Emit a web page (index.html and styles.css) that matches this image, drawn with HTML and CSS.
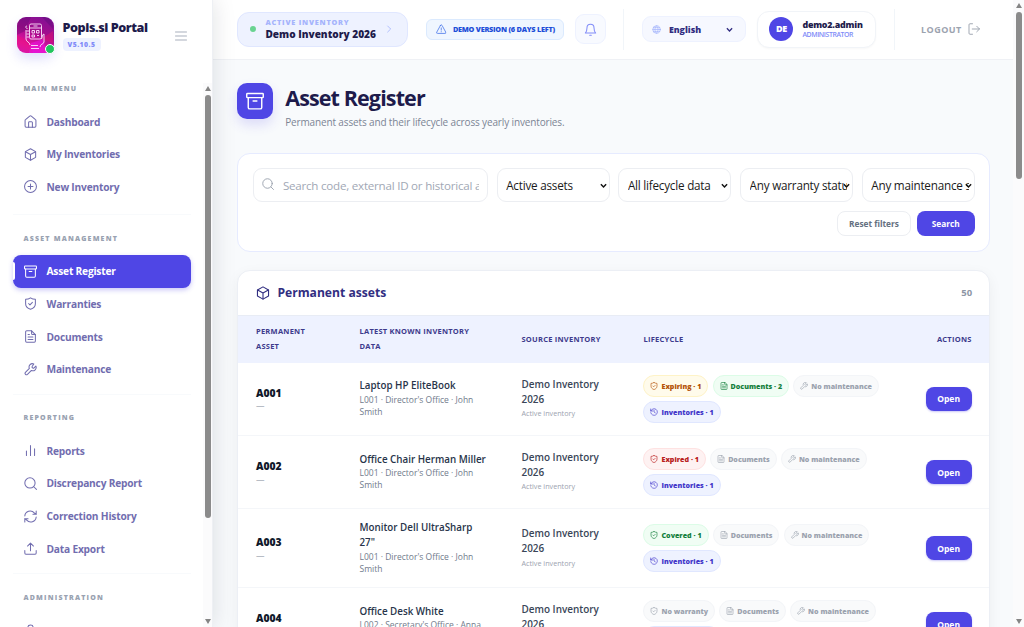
FILE: index.html
```html
<!DOCTYPE html>
<html lang="en">
<head>
    <meta charset="UTF-8">
    <meta name="viewport" content="width=device-width, initial-scale=1.0">
    <title>Asset Register - Popis.si Portal</title>
    <link rel="stylesheet" href="styles.css">
</head>
<body>

<svg class="sprite" xmlns="http://www.w3.org/2000/svg">
    <symbol id="i-home" viewBox="0 0 24 24"><path d="M2 10a2 2 0 0 1 .8-1.600l7.700-6.400a2.400 2.400 0 0 1 3 0l7.700 6.400A2 2 0 0 1 22 10v10.500a2 2 0 0 1-2 2H4a2 2 0 0 1-2-2z"/><path d="M8.500 22.500V14a1.500 1.500 0 0 1 1.500-1.500h4a1.500 1.500 0 0 1 1.500 1.500v8.500"/></symbol>
    <symbol id="i-box" viewBox="0 0 24 24"><path d="M12 1.500l9.500 5.200v10.600L12 22.500l-9.500-5.200V6.700z"/><path d="M2.800 7L12 12l9.200-5M12 12v10.300"/></symbol>
    <symbol id="i-plus" viewBox="0 0 24 24"><circle cx="12" cy="12" r="11"/><path d="M12 7.500v9M7.500 12h9"/></symbol>
    <symbol id="i-archive" viewBox="0 0 24 24"><rect x="1" y="2" width="22" height="5.500" rx="1"/><path d="M3 7.500V20.500a2 2 0 0 0 2 2h14a2 2 0 0 0 2-2V7.500M9.500 12h5"/></symbol>
    <symbol id="i-shield" viewBox="0 0 24 24"><path d="M12 1.500c2.500 1.700 5.500 2.700 9 2.800v8c0 5-3.500 8.500-9 10.500-5.500-2-9-5.500-9-10.500v-8c3.500-.1 6.500-1.100 9-2.800z"/><path d="M8.500 12l2.500 2.500 4.500-4.500"/></symbol>
    <symbol id="i-doc" viewBox="0 0 24 24"><path d="M14 1.500H5a2 2 0 0 0-2 2v17a2 2 0 0 0 2 2h14a2 2 0 0 0 2-2v-12z"/><path d="M14 1.500v5a2 2 0 0 0 2 2h5M7.500 8.500h2.500M7.500 13h9M7.500 17.500h9"/></symbol>
    <symbol id="i-wrench" viewBox="0 0 24 24"><path d="M15 6.500a1 1 0 0 0 0 1.500l1.500 1.500a1 1 0 0 0 1.500 0l3.900-3.900a6.200 6.200 0 0 1-8.200 8.200l-7.300 7.300a2.700 2.700 0 0 1-3.800-3.800l7.300-7.300a6.200 6.200 0 0 1 8.200-8.200z"/></symbol>
    <symbol id="i-chart" viewBox="0 0 24 24"><path d="M4.500 13v8M12 3v18M19.500 9v12"/></symbol>
    <symbol id="i-search" viewBox="0 0 24 24"><circle cx="11" cy="11" r="9.500"/><path d="M18 18l5 5"/></symbol>
    <symbol id="i-refresh" viewBox="0 0 24 24"><path d="M1.500 11A10 10 0 0 1 19 5.200L22.500 8M22.500 2v6h-6M22.500 13A10 10 0 0 1 5 18.800L1.500 16M1.500 22v-6h6"/></symbol>
    <symbol id="i-upload" viewBox="0 0 24 24"><path d="M12 16V2M6.500 7.500L12 2l5.500 5.500M1.500 15.500v5a2 2 0 0 0 2 2h17a2 2 0 0 0 2-2v-5"/></symbol>
    <symbol id="i-user" viewBox="0 0 24 24"><circle cx="12" cy="7" r="5"/><path d="M3 22a9 9 0 0 1 18 0"/></symbol>
    <symbol id="i-menu" viewBox="0 0 24 24"><path d="M1 4h22M1 12h22M1 20h22"/></symbol>
    <symbol id="i-warn" viewBox="0 0 24 24"><path d="M10.300 3L1.800 18.500A2 2 0 0 0 3.500 21.500h17a2 2 0 0 0 1.700-3L13.700 3a2 2 0 0 0-3.400 0zM12 9v5M12 17.500v.5"/></symbol>
    <symbol id="i-bell" viewBox="0 0 24 24"><path d="M2.500 18.500c2-2.500 3-4.500 3-9.500a6.500 6.500 0 0 1 13 0c0 5 1 7 3 9.500zM10.500 22.500h3"/></symbol>
    <symbol id="i-globe" viewBox="0 0 24 24"><circle cx="12" cy="12" r="10"/><path d="M2 12h20M12 2c-5.500 6-5.500 14 0 20M12 2c5.500 6 5.500 14 0 20M4 7h16M4 17h16"/></symbol>
    <symbol id="i-logout" viewBox="0 0 24 24"><path d="M9 1.500H4a2 2 0 0 0-2 2v17a2 2 0 0 0 2 2h5M8.500 12H23M17.500 6.500L23 12l-5.500 5.500"/></symbol>
    <symbol id="i-history" viewBox="0 0 24 24"><path d="M2 3v6h6M2.500 9a10 10 0 1 1-.3 5M12 6.500V12l4 2.500"/></symbol>
    <symbol id="i-right" viewBox="0 0 24 24"><path d="M8 3l9 9-9 9"/></symbol>
    <symbol id="i-down" viewBox="0 0 24 24"><path d="M3 8l9 9 9-9"/></symbol>
</svg>

<div class="app">
    <aside class="sidebar">
        <div class="brand">
            <div class="logo">
                <svg viewBox="0 0 36 36">
                    <path class="facet-a" d="M0 0h14L8 14 0 18zM25 0h11v12z"/>
                    <path class="facet-b" d="M0 18l12 6 4 12H0zM24 22l12-8v12z"/>
                    <path class="facet-c" d="M14 26l12-4 4 14H12z"/>
                    <rect x="12.500" y="7" width="12" height="15" rx="1.500"/>
                    <path d="M12.500 11h12M16.500 9h4M15 13.500h2.500v2.500H15zM19.500 13.500H22v2.500h-2.500zM15 18h2.500v2H15zM20 18.500h2M10.500 11.500c-2 0-2.500-2.500-.5-2.500M12 14H9.500M12 17H9.500M12 20H9.500M9 13v9c0 3 4 3 4 6M24.500 22c1-1 .5-5 2.500-5v8c0 2-4 2-4 5M14 28.500h7M14 31.500h8"/>
                </svg>
                <span class="online"></span>
            </div>
            <div class="brand-text">
                <div class="brand-name">Popis.si Portal</div>
                <span class="version">V5.10.5</span>
            </div>
            <svg class="icon menu-toggle"><use href="#i-menu"/></svg>
        </div>
        <div class="side-body">
            <nav class="nav">
                <div class="nav-group first">
                    <div class="nav-heading">MAIN MENU</div>
                    <a class="nav-item"><svg class="icon"><use href="#i-home"/></svg>Dashboard</a>
                    <a class="nav-item"><svg class="icon"><use href="#i-box"/></svg>My Inventories</a>
                    <a class="nav-item"><svg class="icon"><use href="#i-plus"/></svg>New Inventory</a>
                </div>
                <div class="nav-group">
                    <div class="nav-heading">ASSET MANAGEMENT</div>
                    <a class="nav-item active"><svg class="icon"><use href="#i-archive"/></svg>Asset Register</a>
                    <a class="nav-item"><svg class="icon"><use href="#i-shield"/></svg>Warranties</a>
                    <a class="nav-item"><svg class="icon"><use href="#i-doc"/></svg>Documents</a>
                    <a class="nav-item"><svg class="icon"><use href="#i-wrench"/></svg>Maintenance</a>
                </div>
                <div class="nav-group">
                    <div class="nav-heading">REPORTING</div>
                    <a class="nav-item"><svg class="icon"><use href="#i-chart"/></svg>Reports</a>
                    <a class="nav-item"><svg class="icon"><use href="#i-search"/></svg>Discrepancy Report</a>
                    <a class="nav-item"><svg class="icon"><use href="#i-refresh"/></svg>Correction History</a>
                    <a class="nav-item"><svg class="icon"><use href="#i-upload"/></svg>Data Export</a>
                </div>
                <div class="nav-group">
                    <div class="nav-heading">ADMINISTRATION</div>
                    <a class="nav-item"><svg class="icon"><use href="#i-user"/></svg></a>
                </div>
            </nav>
            <div class="scrollbar side-scroll">
                <span class="arrow-up"></span>
                <span class="thumb"></span>
                <span class="arrow-down"></span>
            </div>
        </div>
    </aside>

    <div class="page">
        <header class="topbar">
            <div class="active-inventory">
                <span class="dot"></span>
                <div>
                    <div class="ai-label">ACTIVE INVENTORY</div>
                    <div class="ai-name">Demo Inventory 2026</div>
                </div>
                <svg class="icon"><use href="#i-right"/></svg>
            </div>
            <div class="demo-badge"><svg class="icon"><use href="#i-warn"/></svg>DEMO VERSION (6 DAYS LEFT)</div>
            <div class="bell"><svg class="icon"><use href="#i-bell"/></svg></div>
            <span class="divider"></span>
            <div class="language">
                <svg class="icon globe"><use href="#i-globe"/></svg>
                <span>English</span>
                <svg class="icon chevron"><use href="#i-down"/></svg>
            </div>
            <div class="user">
                <div class="avatar">DE</div>
                <div>
                    <div class="user-name">demo2.admin</div>
                    <div class="user-role">ADMINISTRATOR</div>
                </div>
            </div>
            <span class="divider last"></span>
            <a class="logout">LOGOUT<svg class="icon"><use href="#i-logout"/></svg></a>
        </header>

        <main class="content">
            <div class="page-head">
                <div class="page-icon"><svg class="icon"><use href="#i-archive"/></svg></div>
                <div>
                    <h1>Asset Register</h1>
                    <p>Permanent assets and their lifecycle across yearly inventories.</p>
                </div>
            </div>

            <form class="filters">
                <div class="filter-grid">
                    <label class="search-box">
                        <svg class="icon"><use href="#i-search"/></svg>
                        <input type="text" placeholder="Search code, external ID or historical asset data">
                    </label>
                    <div class="select">
                        <select><option>Active assets</option></select>
                        <svg class="icon"><use href="#i-down"/></svg>
                    </div>
                    <div class="select">
                        <select><option>All lifecycle data</option></select>
                        <svg class="icon"><use href="#i-down"/></svg>
                    </div>
                    <div class="select">
                        <select><option>Any warranty status</option></select>
                        <svg class="icon"><use href="#i-down"/></svg>
                    </div>
                    <div class="select">
                        <select><option>Any maintenance status</option></select>
                        <svg class="icon"><use href="#i-down"/></svg>
                    </div>
                </div>
                <div class="filter-actions">
                    <button type="button" class="btn-reset">Reset filters</button>
                    <button type="button" class="btn-search">Search</button>
                </div>
            </form>

            <section class="panel">
                <div class="panel-head">
                    <h2><svg class="icon"><use href="#i-box"/></svg>Permanent assets</h2>
                    <span class="count">50</span>
                </div>
                <table>
                    <colgroup>
                        <col class="c-code"><col class="c-data"><col class="c-source"><col><col class="c-actions">
                    </colgroup>
                    <thead>
                        <tr>
                            <th>PERMANENT ASSET</th>
                            <th>LATEST KNOWN INVENTORY DATA</th>
                            <th>SOURCE INVENTORY</th>
                            <th>LIFECYCLE</th>
                            <th class="right">ACTIONS</th>
                        </tr>
                    </thead>
                    <tbody>
                        <tr>
                            <td><div class="code">A001</div><div class="ext">—</div></td>
                            <td><div class="name">Laptop HP EliteBook</div><div class="meta">L001 · Director's Office · John Smith</div></td>
                            <td><div class="source">Demo Inventory 2026</div><div class="state">Active inventory</div></td>
                            <td>
                                <div class="chips">
                                    <span class="chip amber"><svg class="icon"><use href="#i-shield"/></svg>Expiring · 1</span>
                                    <span class="chip green"><svg class="icon"><use href="#i-doc"/></svg>Documents · 2</span>
                                    <span class="chip"><svg class="icon"><use href="#i-wrench"/></svg>No maintenance</span>
                                    <span class="chip indigo"><svg class="icon"><use href="#i-history"/></svg>Inventories · 1</span>
                                </div>
                            </td>
                            <td class="right"><button class="btn-open">Open</button></td>
                        </tr>
                        <tr>
                            <td><div class="code">A002</div><div class="ext">—</div></td>
                            <td><div class="name">Office Chair Herman Miller</div><div class="meta">L001 · Director's Office · John Smith</div></td>
                            <td><div class="source">Demo Inventory 2026</div><div class="state">Active inventory</div></td>
                            <td>
                                <div class="chips">
                                    <span class="chip red"><svg class="icon"><use href="#i-shield"/></svg>Expired · 1</span>
                                    <span class="chip"><svg class="icon"><use href="#i-doc"/></svg>Documents</span>
                                    <span class="chip"><svg class="icon"><use href="#i-wrench"/></svg>No maintenance</span>
                                    <span class="chip indigo"><svg class="icon"><use href="#i-history"/></svg>Inventories · 1</span>
                                </div>
                            </td>
                            <td class="right"><button class="btn-open">Open</button></td>
                        </tr>
                        <tr>
                            <td><div class="code">A003</div><div class="ext">—</div></td>
                            <td><div class="name">Monitor Dell UltraSharp 27"</div><div class="meta">L001 · Director's Office · John Smith</div></td>
                            <td><div class="source">Demo Inventory 2026</div><div class="state">Active inventory</div></td>
                            <td>
                                <div class="chips">
                                    <span class="chip green"><svg class="icon"><use href="#i-shield"/></svg>Covered · 1</span>
                                    <span class="chip"><svg class="icon"><use href="#i-doc"/></svg>Documents</span>
                                    <span class="chip"><svg class="icon"><use href="#i-wrench"/></svg>No maintenance</span>
                                    <span class="chip indigo"><svg class="icon"><use href="#i-history"/></svg>Inventories · 1</span>
                                </div>
                            </td>
                            <td class="right"><button class="btn-open">Open</button></td>
                        </tr>
                        <tr>
                            <td><div class="code">A004</div><div class="ext"></div></td>
                            <td><div class="name">Office Desk White</div><div class="meta">L002 · Secretary's Office · Anna</div></td>
                            <td><div class="source">Demo Inventory 2026</div><div class="state"></div></td>
                            <td>
                                <div class="chips">
                                    <span class="chip"><svg class="icon"><use href="#i-shield"/></svg>No warranty</span>
                                    <span class="chip"><svg class="icon"><use href="#i-doc"/></svg>Documents</span>
                                    <span class="chip"><svg class="icon"><use href="#i-wrench"/></svg>No maintenance</span>
                                    <span class="chip indigo blank"></span>
                                </div>
                            </td>
                            <td class="right"><button class="btn-open">Open</button></td>
                        </tr>
                    </tbody>
                </table>
            </section>
        </main>
    </div>

    <div class="scrollbar page-scroll">
        <span class="arrow-up"></span>
        <span class="thumb"></span>
        <span class="arrow-down"></span>
    </div>
</div>

</body>
</html>
```
FILE: styles.css
```css
* {
    box-sizing: border-box;
}

body {
    margin: 0;
    height: 100vh;
    overflow: hidden;
    background: #f8fafc;
    font-family: "Open Sans", "Noto Sans", sans-serif;
    color: #1e293b;
}

button, input, select {
    font-family: inherit;
}

.sprite {
    display: none;
}

.icon {
    width: 13px;
    height: 13px;
    flex: none;
    fill: none;
    stroke: currentColor;
    stroke-width: 1.9;
    stroke-linecap: round;
    stroke-linejoin: round;
}

.app {
    display: flex;
    height: 627px;
}

/* Sidebar */
.sidebar {
    position: relative;
    z-index: 2;
    width: 213.4px;
    flex: none;
    display: flex;
    flex-direction: column;
    background: #fff;
    border-right: 1px solid #eef0f4;
    box-shadow: 0 0 22px rgba(15, 23, 42, 0.13);
}

.brand {
    display: flex;
    height: 83px;
    flex: none;
    padding: 17px 25px 0 17px;
}

.logo {
    position: relative;
    width: 36.5px;
    height: 36px;
    border-radius: 9px;
    background: linear-gradient(200deg, #7a1296, #a80c8c 45%, #e313a4 75%, #c818d6);
    box-shadow: 0 6px 12px rgba(99, 102, 241, 0.2);
}

.logo svg {
    display: block;
    width: 36px;
    height: 36px;
    border-radius: 9px;
    fill: none;
    stroke: #fbe4fb;
    stroke-width: 0.9;
}

.logo svg .facet-a,
.logo svg .facet-b,
.logo svg .facet-c {
    stroke: none;
    fill: rgba(80, 10, 110, 0.3);
}

.logo svg .facet-b {
    fill: rgba(235, 20, 110, 0.4);
}

.logo svg .facet-c {
    fill: rgba(240, 20, 240, 0.5);
}

.online {
    position: absolute;
    right: -1px;
    bottom: -1px;
    width: 10px;
    height: 10px;
    border-radius: 50%;
    background: #22c55e;
    border: 1px solid #fff;
}

.brand-text {
    flex: 1;
    padding: 2px 0 0 9px;
}

.brand-name {
    font-size: 12.6px;
    line-height: 17px;
    font-weight: 800;
    letter-spacing: -0.45px;
    color: #1e1b4b;
    white-space: nowrap;
}

.version {
    display: block;
    width: 38px;
    height: 13px;
    margin-top: 2px;
    border-radius: 4px;
    background: #eef2ff;
    color: #818cf8;
    font-size: 6.8px;
    line-height: 13px;
    font-weight: 800;
    letter-spacing: 0.5px;
    text-align: center;
}

.menu-toggle {
    width: 12px;
    height: 12px;
    margin-top: 12.5px;
    color: #a3abb8;
}

.side-body {
    display: flex;
    flex: 1;
    min-height: 0;
}

.nav {
    flex: 1;
    overflow: hidden;
    padding-left: 12.5px;
}

.nav-group {
    width: 178.5px;
    border-top: 1px solid #f8fafc;
    padding-bottom: 8px;
}

.nav-group.first {
    border-top: 0;
    padding-bottom: 11px;
}

.nav-heading {
    height: 39.7px;
    padding: 16.6px 0 0 11px;
    font-size: 7px;
    line-height: 14px;
    font-weight: 800;
    letter-spacing: 1.2px;
    color: #99a2b1;
}

.first .nav-heading {
    height: 22.2px;
    padding-top: 1px;
    line-height: 10px;
    letter-spacing: 1.1px;
}

.nav-item {
    position: relative;
    display: flex;
    align-items: center;
    gap: 9.5px;
    height: 32.7px;
    padding-left: 11.5px;
    border-radius: 8px;
    font-size: 10.2px;
    font-weight: 700;
    letter-spacing: -0.2px;
    color: #716daf;
}

.nav-item.active {
    color: #fff;
    background: #4f46e5;
    box-shadow: 0 2px 5px rgba(79, 70, 229, 0.3);
}

.nav-item.active::before {
    content: "";
    position: absolute;
    left: 0;
    top: 7px;
    width: 2px;
    height: 18px;
    border-radius: 0 3px 3px 0;
    background: #fff;
}

/* Scrollbars */
.scrollbar {
    display: flex;
    flex-direction: column;
    align-items: center;
    flex: none;
    background: #fbfbfc;
}

.thumb {
    width: 6px;
    border-radius: 3px;
    background: #8b8b8b;
}

.arrow-up, .arrow-down {
    border: 3.5px solid transparent;
    border-top: 0;
    border-bottom: 5px solid #858585;
}

.arrow-down {
    border-bottom: 0;
    border-top: 5px solid #858585;
    margin-top: auto;
}

.side-scroll {
    width: 9px;
    padding: 3px 0 3px;
}

.side-scroll .thumb {
    height: 423px;
    margin-top: 4px;
}

.page-scroll {
    width: 11px;
    padding: 3px 0 3px;
}

.page-scroll .thumb {
    height: 167px;
    margin-top: 4px;
}

/* Top bar */
.page {
    flex: 1;
    min-width: 0;
    overflow: hidden;
}

.topbar {
    display: flex;
    align-items: center;
    height: 59.5px;
    padding: 0 24px;
    background: #fff;
    border-bottom: 1px solid #eff1f5;
}

.active-inventory {
    display: flex;
    align-items: center;
    width: 171px;
    height: 35px;
    padding: 0 14px 0 12px;
    border: 1px solid #e0e7ff;
    border-radius: 12px;
    background: #eef2ff;
    white-space: nowrap;
}

.active-inventory .dot {
    width: 6px;
    height: 6px;
    margin-right: 9px;
    border-radius: 50%;
    background: #69d391;
}

.active-inventory .icon {
    width: 8px;
    height: 8px;
    margin-left: auto;
    color: #a5b4fc;
    stroke-width: 2.5;
}

.ai-label {
    font-size: 7.3px;
    line-height: 11px;
    font-weight: 800;
    letter-spacing: 0.78px;
    color: #a5b4fc;
}

.ai-name {
    font-size: 10.1px;
    line-height: 13px;
    font-weight: 800;
    color: #1e1b4b;
}

.demo-badge {
    display: flex;
    align-items: center;
    gap: 6px;
    width: 138px;
    height: 21.5px;
    margin-left: 18px;
    padding-left: 9px;
    border: 1px solid #dbeafe;
    border-radius: 6px;
    background: #eff6ff;
    color: #1d4ed8;
    font-size: 7.3px;
    font-weight: 800;
    letter-spacing: -0.24px;
    white-space: nowrap;
}

.demo-badge .icon {
    width: 10.5px;
    height: 10.5px;
    color: #4f7bea;
}

.bell {
    display: flex;
    align-items: center;
    justify-content: center;
    width: 30.5px;
    height: 30px;
    margin-left: 11px;
    border: 1px solid #eef2ff;
    border-radius: 9px;
    background: #f8faff;
    color: #818cf8;
}

.divider {
    width: 1px;
    height: 41px;
    margin: 0 17.5px;
    background: #f1f5f9;
}

.language {
    display: flex;
    align-items: center;
    width: 104.5px;
    height: 26px;
    padding: 0 12px 0 9px;
    border: 1px solid #eef2ff;
    border-radius: 9px;
    background: #f6f8ff;
    color: #312e81;
    font-size: 8.8px;
    font-weight: 800;
}

.language span {
    margin-top: 1px;
}

.language .globe {
    width: 9px;
    height: 9px;
    margin-right: 8px;
    color: #a5b4fc;
}

.language .chevron {
    width: 7px;
    height: 7px;
    margin-left: auto;
    stroke-width: 4.5;
    stroke-linecap: butt;
    stroke-linejoin: miter;
}

.user {
    display: flex;
    align-items: center;
    gap: 9px;
    width: 119px;
    height: 37px;
    margin-left: 11px;
    padding-left: 11px;
    border: 1px solid #f1f4f8;
    border-radius: 12px;
    background: #fff;
    box-shadow: 0 1px 2px rgba(15, 23, 42, 0.03);
}

.avatar {
    width: 24px;
    height: 24px;
    border-radius: 50%;
    background: #4f46e5;
    color: #fff;
    font-size: 9px;
    line-height: 24px;
    font-weight: 800;
    text-align: center;
    letter-spacing: -0.3px;
}

.user-name {
    font-size: 8.9px;
    line-height: 11px;
    font-weight: 800;
    letter-spacing: -0.2px;
    color: #1e1b4b;
}

.user-role {
    font-size: 6.9px;
    line-height: 9px;
    font-weight: 600;
    letter-spacing: -0.4px;
    color: #818cf8;
}

.divider.last {
    margin-right: 26px;
}

.logout {
    display: flex;
    align-items: center;
    gap: 6.5px;
    font-size: 9px;
    font-weight: 700;
    letter-spacing: 0.5px;
    color: #9ca3af;
}

.logout .icon {
    width: 12px;
    height: 12px;
}

/* Content */
.content {
    padding: 23px 22.8px 0 24px;
}

.page-head {
    display: flex;
    gap: 11.8px;
    height: 70.5px;
}

.page-icon {
    display: flex;
    align-items: center;
    justify-content: center;
    width: 36px;
    height: 36px;
    border-radius: 10px;
    background: #4f46e5;
    color: #fff;
    box-shadow: 0 6px 12px rgba(79, 70, 229, 0.16);
}

.page-icon .icon {
    width: 18px;
    height: 18px;
}

h1 {
    margin: 2px 0 0;
    font-size: 21.5px;
    line-height: 26px;
    font-weight: 700;
    letter-spacing: -0.88px;
    color: #1e1b4b;
}

.page-head p {
    margin: 4px 0 0;
    font-size: 10px;
    line-height: 14px;
    letter-spacing: -0.14px;
    color: #7b8494;
}

.filters {
    height: 98.5px;
    padding: 14px 14.5px 0;
    border: 1px solid #e6ebff;
    border-radius: 13px;
    background: #fff;
}

.filter-grid {
    display: grid;
    grid-template-columns: 235px repeat(4, 1fr);
    gap: 8.8px;
}

.search-box {
    display: flex;
    align-items: center;
    gap: 9px;
    height: 34px;
    padding: 0 8px;
    border: 1px solid #eceef2;
    border-radius: 9px;
}

.search-box .icon {
    width: 12px;
    height: 12px;
    margin-top: -3px;
    color: #9ca3af;
}

.search-box input {
    flex: 1;
    min-width: 0;
    padding: 0;
    border: 0;
    outline: 0;
    background: none;
    font-size: 11.6px;
    letter-spacing: -0.23px;
}

.search-box input::placeholder {
    color: #a1a8b5;
}

.select {
    position: relative;
}

.select select {
    appearance: none;
    display: block;
    width: 100%;
    height: 34px;
    padding: 0 5px 0 8.5px;
    border: 1px solid #eceef2;
    border-radius: 9px;
    background: #fff;
    color: #1a1a1a;
    font-size: 11.7px;
    letter-spacing: -0.22px;
}

.select .icon {
    position: absolute;
    right: 3px;
    top: 14px;
    width: 7px;
    height: 7px;
    color: #111;
    stroke-width: 5;
    stroke-linecap: butt;
    stroke-linejoin: miter;
}

.filter-actions {
    display: flex;
    justify-content: flex-end;
    gap: 5.5px;
    margin-top: 9px;
}

.filter-actions button {
    height: 25px;
    padding: 0;
    border-radius: 8px;
    font-size: 8.3px;
    font-weight: 700;
}

.filter-actions .btn-reset {
    width: 74.5px;
    border: 1px solid #eceef2;
    background: #fff;
    color: #64707f;
}

.filter-actions .btn-search {
    width: 58px;
    border: 0;
    background: #4f46e5;
    color: #fff;
}

.panel {
    margin-top: 18px;
    border: 1px solid #eceff5;
    border-radius: 13px 13px 0 0;
    background: #fff;
    box-shadow: 0 4px 14px rgba(15, 23, 42, 0.05);
}

.panel-head {
    display: flex;
    align-items: center;
    justify-content: space-between;
    height: 45px;
    padding: 0 17px 0 18px;
    border-bottom: 1px solid #e8ecf5;
}

h2 {
    display: flex;
    align-items: center;
    gap: 7px;
    margin: 0;
    font-size: 12.14px;
    font-weight: 700;
    color: #312e81;
}

.panel-head .icon {
    width: 14px;
    height: 14px;
}

.count {
    font-size: 9.5px;
    font-weight: 700;
    color: #8d96a5;
}

table {
    width: 100%;
    table-layout: fixed;
    border-collapse: collapse;
}

.c-code {
    width: 103.5px;
}

.c-data {
    width: 162px;
}

.c-source {
    width: 122px;
}

.c-actions {
    width: 82px;
}

th {
    height: 47px;
    padding: 0 17.6px;
    background: #eef2ff;
    color: #3d3a8c;
    font-size: 7.5px;
    line-height: 14.7px;
    font-weight: 700;
    letter-spacing: 0.24px;
    text-align: left;
}

td {
    padding: 12px 17.6px;
    border-bottom: 1px solid #f4f6f9;
    vertical-align: middle;
}

td:nth-child(2) {
    padding-right: 16px;
}

th.right, td.right {
    padding-left: 0;
    text-align: right;
}

.code {
    margin-top: 1px;
    font-size: 10.3px;
    line-height: 14.7px;
    font-weight: 800;
    color: #0f172a;
}

.ext {
    min-height: 12px;
    font-size: 8.5px;
    line-height: 12px;
    color: #9ca3af;
}

.name {
    margin-top: 0.5px;
    font-size: 9.8px;
    line-height: 14.7px;
    font-weight: 600;
    color: #28344a;
}

.meta {
    min-height: 24px;
    font-size: 8.5px;
    line-height: 12px;
    color: #717b8c;
}

.source {
    font-size: 9.95px;
    line-height: 14.7px;
    font-weight: 550;
    color: #3a4658;
}

.state {
    min-height: 13px;
    margin-top: 1px;
    font-size: 7.2px;
    line-height: 13px;
    color: #9ca3af;
}

.chips {
    display: flex;
    flex-wrap: wrap;
    gap: 4.2px;
    margin-right: -18px;
}

.chip {
    display: inline-flex;
    align-items: center;
    gap: 3px;
    height: 22px;
    padding: 0 6px;
    border: 1px solid #f3f5f8;
    border-radius: 11px;
    background: #f9fafb;
    color: #9ca3af;
    font-size: 7.12px;
    font-weight: 800;
    white-space: nowrap;
}

.chip .icon {
    width: 8px;
    height: 8px;
}

.chip.amber {
    background: #fffbeb;
    border-color: #fef3c7;
    color: #b45309;
}

.chip.green {
    background: #f0fdf4;
    border-color: #dcfce7;
    color: #15803d;
}

.chip.red {
    background: #fef2f2;
    border-color: #fee2e2;
    color: #b91c1c;
}

.chip.indigo {
    background: #eef2ff;
    border-color: #e0e7ff;
    color: #4338ca;
}

.chip.blank {
    width: 77px;
}

.btn-open {
    width: 46px;
    height: 24px;
    padding: 0;
    border: 0;
    border-radius: 8px;
    background: #4f46e5;
    color: #fff;
    font-size: 8.5px;
    font-weight: 700;
    vertical-align: middle;
    box-shadow: 0 1px 2px rgba(79, 70, 229, 0.3);
}
```
